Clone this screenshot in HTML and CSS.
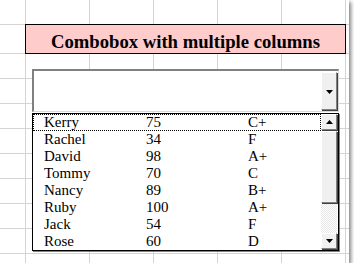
FILE: index.html
```html
<!DOCTYPE html>
<html>
<head>
<meta charset="utf-8">
<link rel="stylesheet" href="styles.css">
</head>
<body>
<div class="sheet">
  <div class="title">Combobox with multiple columns</div>
  <div class="combo">
    <div class="field"></div>
    <div class="btn combo-btn">
      <svg width="7" height="4" viewBox="0 0 7 4"><polygon points="0,0 7,0 3.5,4" fill="#000"/></svg>
    </div>
  </div>
  <div class="list">
    <div class="rows">
      <div class="row focus"><span>Kerry</span><span>75</span><span>C+</span></div>
      <div class="row"><span>Rachel</span><span>34</span><span>F</span></div>
      <div class="row"><span>David</span><span>98</span><span>A+</span></div>
      <div class="row"><span>Tommy</span><span>70</span><span>C</span></div>
      <div class="row"><span>Nancy</span><span>89</span><span>B+</span></div>
      <div class="row"><span>Ruby</span><span>100</span><span>A+</span></div>
      <div class="row"><span>Jack</span><span>54</span><span>F</span></div>
      <div class="row"><span>Rose</span><span>60</span><span>D</span></div>
    </div>
    <div class="scrollbar">
      <div class="btn sb-btn">
        <svg width="7" height="4" viewBox="0 0 7 4"><polygon points="0,4 7,4 3.5,0" fill="#000"/></svg>
      </div>
      <div class="btn thumb"></div>
      <div class="track"></div>
      <div class="btn sb-btn">
        <svg width="7" height="4" viewBox="0 0 7 4"><polygon points="0,0 7,0 3.5,4" fill="#000"/></svg>
      </div>
    </div>
  </div>
</div>
</body>
</html>
```
FILE: styles.css
```css
html, body {
  margin: 0;
  padding: 0;
  background: #ffffff;
}
.sheet {
  width: 349px;
  height: 263px;
  overflow: hidden;
  box-sizing: border-box;
  padding-top: 24px;
  background-color: #ffffff;
  background-image:
    linear-gradient(#d4d4d4, #d4d4d4),
    repeating-linear-gradient(to bottom, #d4d4d4 0 1px, transparent 1px 25px),
    repeating-linear-gradient(to right, #d4d4d4 0 1px, transparent 1px 64px);
  background-repeat: no-repeat, no-repeat, no-repeat;
  background-position: 0 24px, 0 53px, 25px 0;
  background-size: 100% 1px, 100% 100%, 100% 100%;
  box-shadow: 2px 2px 4px rgba(0, 0, 0, 0.5);
  font-family: "Liberation Serif", "Times New Roman", "DejaVu Serif", serif;
  color: #000;
}
.title {
  margin-left: 25px;
  width: 321px;
  height: 30px;
  box-sizing: border-box;
  border: 1px solid #000;
  background: #ffcccc;
  font-weight: bold;
  font-size: 18.67px;
  line-height: 30px;
  padding-top: 2px;
  text-align: center;
  white-space: nowrap;
  overflow: hidden;
}
.combo {
  margin: 15px 0 0 32px;
  width: 307px;
  height: 43px;
  box-sizing: border-box;
  border-top: 2px solid #808080;
  border-left: 2px solid #808080;
  border-right: 1px solid #d8d8d8;
  border-bottom: 1px solid #d8d8d8;
  background: #fff;
  display: flex;
  padding-top: 1px;
}
.field {
  flex: 1;
}
.btn {
  box-sizing: border-box;
  background: #f0f0f0;
  border-top: 1px solid #ffffff;
  border-left: 1px solid #ffffff;
  border-right: 1px solid #808080;
  border-bottom: 1px solid #808080;
  box-shadow: 1px 1px 0 #404040;
  display: flex;
  align-items: center;
  justify-content: center;
}
.combo-btn {
  width: 16px;
  margin-right: 1px;
  margin-bottom: 1px;
}
.combo-btn svg {
  margin-top: 2px;
}
.list {
  margin: 1px 0 0 32px;
  width: 307px;
  height: 138px;
  box-sizing: border-box;
  border: 1px solid #000;
  box-shadow: 1px 1px 0 #808080;
  background: #fff;
  display: flex;
}
.rows {
  width: 288px;
  font-size: 15px;
  line-height: 17px;
}
.row {
  height: 17px;
  box-sizing: border-box;
  display: grid;
  grid-template-columns: 102px 102px 1fr;
  padding-left: 10px;
  border: 1px solid transparent;
  line-height: 15px;
  white-space: nowrap;
}
.row.focus {
  border: 1px dotted #000;
}
.scrollbar {
  width: 16px;
  display: flex;
  flex-direction: column;
}
.sb-btn {
  height: 16px;
  width: 16px;
  margin-bottom: 1px;
}
.thumb {
  height: 72px;
  width: 16px;
  margin-bottom: 1px;
}
.track {
  flex: 1;
  background-color: #fff;
  background-image: repeating-conic-gradient(#e6e6e6 0 25%, #ffffff 0 50%);
  background-size: 2px 2px;
}
```
